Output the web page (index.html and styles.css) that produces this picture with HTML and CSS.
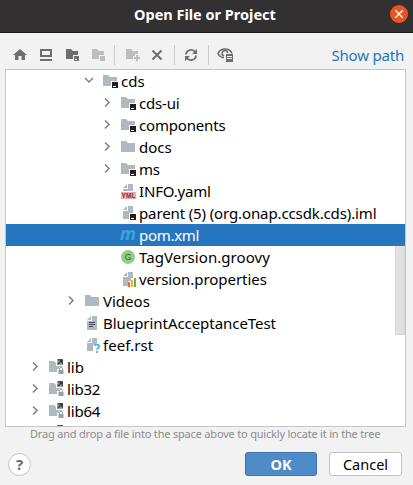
FILE: index.html
```
<!DOCTYPE html>
<html lang="en">
<head>
<meta charset="utf-8">
<title>Open File or Project</title>
<link rel="stylesheet" href="styles.css">
</head>
<body>
<svg class="defs" width="0" height="0">
  <symbol id="down" viewBox="0 0 16 16"><path d="M4 5l4 4 4-4" fill="none" stroke="#808080" stroke-width="1.5"/></symbol>
  <symbol id="right" viewBox="0 0 16 16"><path d="M6 3.5l4 4-4 4" fill="none" stroke="#808080" stroke-width="1.5"/></symbol>
  <symbol id="folder" viewBox="0 0 16 16"><path d="M1 2h5l2 2h7v9H1z" fill="#aeb9c0"/></symbol>
  <symbol id="module" viewBox="0 0 16 16"><path d="M1 2h5l2 2h7v4H9v5H1z" fill="#aeb9c0"/><path d="M10 9h6v6h-6z" fill="#231f20"/><path d="M11 13h3v1h-3z" fill="#fff"/></symbol>
  <symbol id="locked" viewBox="0 0 16 16"><path d="M1 2h5l2 2v3h6v1h-3v2H9v3H1z" fill="#aeb9c0"/><path d="M9 0h6v6H9z" fill="#9ba6ad"/><path d="M10 .8h4.2V5M14 1L10 5" fill="none" stroke="#303238" stroke-width="1.3"/><path d="M10.500 11h5v4h-5z" fill="#91a0aa"/><path d="M11.500 11V9.800a1.500 1.500 0 0 1 3 0V11" fill="none" stroke="#91a0aa"/></symbol>
  <symbol id="yml" viewBox="0 0 16 16"><path d="M7 1v4H3zM8 1h5v7H3V6h5z" fill="#aeb9c0"/><path d="M1 9h15v7H1z" fill="#f9a5b1"/><text x="1.500" y="15" class="yml-text" textLength="14">YML</text></symbol>
  <symbol id="iml" viewBox="0 0 16 16"><path d="M7 1v4H3zM8 1h5v7H9v6H3V6h5z" fill="#aeb9c0"/><path d="M10 9h6v6h-6z" fill="#231f20"/><path d="M11 13h3v1h-3z" fill="#fff"/></symbol>
  <symbol id="maven" viewBox="0 0 16 16"><text x="0" y="12.500" class="maven-text" textLength="16" lengthAdjust="spacingAndGlyphs">m</text></symbol>
  <symbol id="groovy" viewBox="0 0 16 16"><circle cx="8" cy="8" r="7" fill="#93cd86"/><text x="8" y="11" class="groovy-text">G</text></symbol>
  <symbol id="props" viewBox="0 0 16 16"><path d="M7 1v4H3zM8 1h5v6h-2v3H8v5H3V6h5z" fill="#aeb9c0"/><path d="M8 11h2v5H8z" fill="#f26522"/><path d="M11 9h2v7h-2z" fill="#f4af3d"/><path d="M14 7h2v9h-2z" fill="#62b543"/></symbol>
  <symbol id="text" viewBox="0 0 16 16"><path d="M7 1v4H3zM8 1h5v14H3V6h5z" fill="#aeb9c0"/><path d="M5 7.500h6M5 9.500h6M5 11.500h4" stroke="#454b50"/></symbol>
  <symbol id="unknown" viewBox="0 0 16 16"><path d="M7 1v4H3zM8 1h5v5l-4 2v6H3V6h5z" fill="#aeb9c0"/><path d="M10.500 8.800c.5-1.800 4.600-1.800 4.600.6 0 1.700-2.100 1.700-2.100 3.300M13 14v2" fill="none" stroke="#40b6e0" stroke-width="1.800"/></symbol>
</svg>
<header class="titlebar"><h1 class="title">Open File or Project</h1>
  <svg class="close" viewBox="0 0 18 18"><circle cx="9" cy="9" r="9" fill="#e95420"/><path d="M5.300 5.300l7.400 7.400M12.700 5.300l-7.400 7.400" stroke="#fff" stroke-width="1.300"/></svg>
</header>
<nav class="toolbar">
  <svg class="tool" viewBox="0 0 16 16"><path d="M8 2l7 6h-2v5H9.500V9h-3v4H3V8H1z" fill="#6e6e6e"/></svg>
  <svg class="tool" viewBox="0 0 16 16"><path d="M3 3h10v6H3zM2 13h12" fill="none" stroke="#6e6e6e" stroke-width="2"/></svg>
  <svg class="tool" viewBox="0 0 16 16"><path d="M2 2h5l2 2h5v4H9v4H2z" fill="#6e6e6e"/><path d="M10 9h5v5h-5z" fill="#6e6e6e"/><path d="M11 12h2v1h-2z" fill="#fff"/></svg>
  <svg class="tool" viewBox="0 0 16 16"><path d="M2 2h5l2 2h5v4H9v4H2zM10 9h5v5h-5z" fill="#bdbdbd"/></svg>
  <span class="sep"></span>
  <svg class="tool" viewBox="0 0 16 16"><path d="M2 2h5l2 2h5v3h-3v2H9v3H2z" fill="#bdbdbd"/><path d="M13 8v6M10 11h6" stroke="#bdbdbd" stroke-width="2"/></svg>
  <svg class="tool left" viewBox="0 0 16 16"><path d="M3.500 3.500l9 9M12.500 3.500l-9 9" stroke="#6e6e6e" stroke-width="2"/></svg>
  <span class="sep"></span>
  <svg class="tool left" viewBox="0 0 16 16"><path d="M3 7.500C3.300 2.600 9.800 1.300 12.500 5.200M13 8.500c-.3 4.900-6.800 6.200-9.500 2.300" fill="none" stroke="#6e6e6e" stroke-width="1.800"/><path d="M14 2v5H9zM2 14V9h5z" fill="#6e6e6e"/></svg>
  <span class="sep"></span>
  <svg class="tool eye" viewBox="0 0 16 16"><path d="M7 10.700C4 10.500 2 8.700 1 6.500c2.500-6 11.500-6 14 0" fill="none" stroke="#6e6e6e" stroke-width="1.700"/><path d="M7 9a2.800 2.800 0 1 1 3.700-3" fill="none" stroke="#6e6e6e" stroke-width="1.600"/><path d="M9 7h7v8H9z" fill="#6e6e6e"/><path d="M10 9.500h5M10 11.500h5" stroke="#f2f2f2"/></svg>
  <a class="show-path">Show path</a>
</nav>
<main class="tree">
  <div class="row d3"><svg class="ic"><use href="#down"/></svg><svg class="ic file"><use href="#module"/></svg><span>cds</span></div>
  <div class="row d4"><svg class="ic"><use href="#right"/></svg><svg class="ic file"><use href="#module"/></svg><span class="snug">cds-ui</span></div>
  <div class="row d4"><svg class="ic"><use href="#right"/></svg><svg class="ic file"><use href="#module"/></svg><span class="snug">components</span></div>
  <div class="row d4"><svg class="ic"><use href="#right"/></svg><svg class="ic file"><use href="#folder"/></svg><span>docs</span></div>
  <div class="row d4"><svg class="ic"><use href="#right"/></svg><svg class="ic file"><use href="#module"/></svg><span class="tight">ms</span></div>
  <div class="row d4"><svg class="ic"></svg><svg class="ic file"><use href="#yml"/></svg><span class="snug">INFO.yaml</span></div>
  <div class="row d4"><svg class="ic"></svg><svg class="ic file"><use href="#iml"/></svg><span class="close-set">parent (5) (org.onap.ccsdk.cds).iml</span></div>
  <div class="row d4 selected"><svg class="ic"></svg><svg class="ic file"><use href="#maven"/></svg><span class="tight">pom.xml</span></div>
  <div class="row d4"><svg class="ic"></svg><svg class="ic file"><use href="#groovy"/></svg><span class="loose">TagVersion.groovy</span></div>
  <div class="row d4"><svg class="ic"></svg><svg class="ic file"><use href="#props"/></svg><span class="slight">version.properties</span></div>
  <div class="row d2"><svg class="ic"><use href="#right"/></svg><svg class="ic file"><use href="#folder"/></svg><span>Videos</span></div>
  <div class="row d2"><svg class="ic"></svg><svg class="ic file"><use href="#text"/></svg><span class="slight">BlueprintAcceptanceTest</span></div>
  <div class="row d2"><svg class="ic"></svg><svg class="ic file"><use href="#unknown"/></svg><span class="loose">feef.rst</span></div>
  <div class="row d0"><svg class="ic"><use href="#right"/></svg><svg class="ic file"><use href="#locked"/></svg><span>lib</span></div>
  <div class="row d0"><svg class="ic"><use href="#right"/></svg><svg class="ic file"><use href="#locked"/></svg><span class="snug">lib32</span></div>
  <div class="row d0"><svg class="ic"><use href="#right"/></svg><svg class="ic file"><use href="#locked"/></svg><span class="snug">lib64</span></div>
  <div class="row d0"><svg class="ic"></svg><svg class="ic file"><use href="#locked"/></svg></div>
  <div class="thumb"></div>
</main>
<p class="hint">Drag and drop a file into the space above to quickly locate it in the tree</p>
<footer class="actions">
  <button class="help">?</button>
  <button class="btn primary">OK</button>
  <button class="btn cancel">Cancel</button>
</footer>
</body>
</html>
```
FILE: styles.css
```
* { box-sizing: border-box; }
body { margin: 0; width: 413px; height: 485px; overflow: hidden; background: #f2f2f2; color: #000; font: 15px/22px "Noto Sans", sans-serif; }
.defs { display: none; }
.titlebar { height: 33px; background: #333031; border-bottom: 1px solid #1d1b1b; display: flex; align-items: center; padding: 0 5px 4px 134px; color: #fff; }
.title { margin: 0; flex: 1; font-size: 14.5px; line-height: 22px; white-space: nowrap; }
.close { width: 18px; height: 18px; }
.toolbar { height: 36px; padding: 8px 9px 0 12px; display: flex; align-items: center; }
.tool { width: 16px; height: 16px; margin-right: 10px; flex: none; }
.left { margin-left: -1px; margin-right: 11px; }
.eye { margin-left: -1px; }
.sep { width: 1px; height: 20px; background: #cdcdcd; margin: 0 9px 0 -2px; flex: none; }
.show-path { margin-left: auto; color: #2675bf; white-space: nowrap; letter-spacing: -.2px; }
.tree { position: relative; margin: 0 7px 0 5px; height: 358px; border: 1px solid #c8c8c8; background: #fff; overflow: hidden; }
.row { height: 22px; display: flex; align-items: center; white-space: nowrap; }
.d0 { padding-left: 21px; }
.d2 { padding-left: 57px; }
.d3 { padding-left: 75px; }
.d4 { padding-left: 93px; }
.ic { width: 16px; height: 16px; flex: none; }
.file { margin: 0 3px 0 5px; }
.slight { letter-spacing: -.05px; }
.close-set { letter-spacing: -.12px; }
.snug { letter-spacing: -.18px; }
.tight { letter-spacing: -.3px; }
.loose { letter-spacing: .07px; }
.selected { background: #2675bf; color: #fff; }
.thumb { position: absolute; right: 0; top: 172px; width: 10px; height: 93px; background: rgba(115,115,115,.22); border: 1px solid rgba(90,90,90,.06); }
.yml-text { font: bold 6.5px "Liberation Sans", sans-serif; fill: #6b3f4a; }
.maven-text { font: italic bold 18px "Open Sans", sans-serif; fill: #40a4dc; }
.groovy-text { font: 8.5px "Liberation Sans", sans-serif; fill: #345c30; text-anchor: middle; }
.hint { margin: 0; height: 15px; padding-left: 30px; font-size: 11px; line-height: 14px; letter-spacing: -.19px; color: #8c8c8c; white-space: nowrap; }
.actions { display: flex; align-items: center; padding: 10px 11px 0 8px; }
.help { width: 23px; height: 23px; padding: 0; border: 1px solid #c4c4c4; border-radius: 50%; background: #fff; color: #6e6e6e; font: bold 15px/20px "Noto Sans", sans-serif; margin-right: auto; }
.btn { width: 73px; height: 24px; padding: 0; border: 1px solid #c4c4c4; border-radius: 3px; background: #fff; color: #000; font: 14.5px/21px "Noto Sans", sans-serif; }
.primary { width: 72px; background: #4f8bc9; border-color: #3971b2; color: #fff; font-weight: bold; margin-right: 12px; }
```
